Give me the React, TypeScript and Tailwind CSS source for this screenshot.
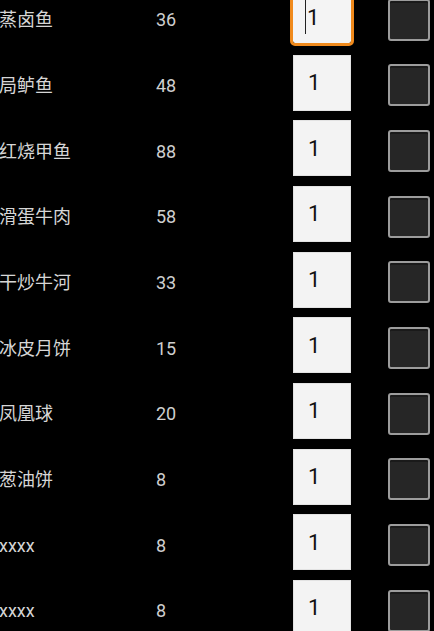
const dishes = [
  { name: '蒸卤鱼', price: 36 },
  { name: '局鲈鱼', price: 48 },
  { name: '红烧甲鱼', price: 88 },
  { name: '滑蛋牛肉', price: 58 },
  { name: '干炒牛河', price: 33 },
  { name: '冰皮月饼', price: 15 },
  { name: '凤凰球', price: 20 },
  { name: '葱油饼', price: 8 },
  { name: 'xxxx', price: 8 },
  { name: 'xxxx', price: 8 },
];

const font = { fontFamily: 'Roboto, "Noto Sans CJK SC", sans-serif' };

export default function App() {
  return (
    <div className="w-[434px] h-[631px] bg-black overflow-hidden" style={font}>
      {/* list is scrolled a little, first row is cut at the top */}
      <div className="-mt-[13px] flex flex-col">
        {dishes.map((dish, i) => (
          <div key={i} className="flex items-center h-[65.67px]">
            <div className="w-[157px] -ml-px text-[18px] text-[#d6d6d6] whitespace-nowrap">{dish.name}</div>
            <div className="w-[137px] text-[18px] text-[#cfcfcf]">{dish.price}</div>
            {i === 0 ? (
              <div className="self-start mt-[4px] w-[58px] h-[52px] bg-[#f4f4f4] rounded-[2px] outline-[3px] outline-[#f08a1c] flex items-center pl-[12px] text-[22px] text-[#111]">
                <span className="inline-block w-px h-[34px] bg-[#222] mr-[1px]" />
                <span>1</span>
              </div>
            ) : (
              <div className="self-start mt-[2px] w-[58px] h-[56px] bg-[#f3f3f3] border border-[#e2e2e2] flex items-center pl-[14px] text-[22px] text-[#111]">
                1
              </div>
            )}
            <div className="ml-[37px] w-[42px] h-[42px] rounded-[3px] border-2 border-[#9c9c9c] bg-[#262626] shadow-[inset_0_2px_0_#1a1a1a]" />
          </div>
        ))}
      </div>
    </div>
  );
}
